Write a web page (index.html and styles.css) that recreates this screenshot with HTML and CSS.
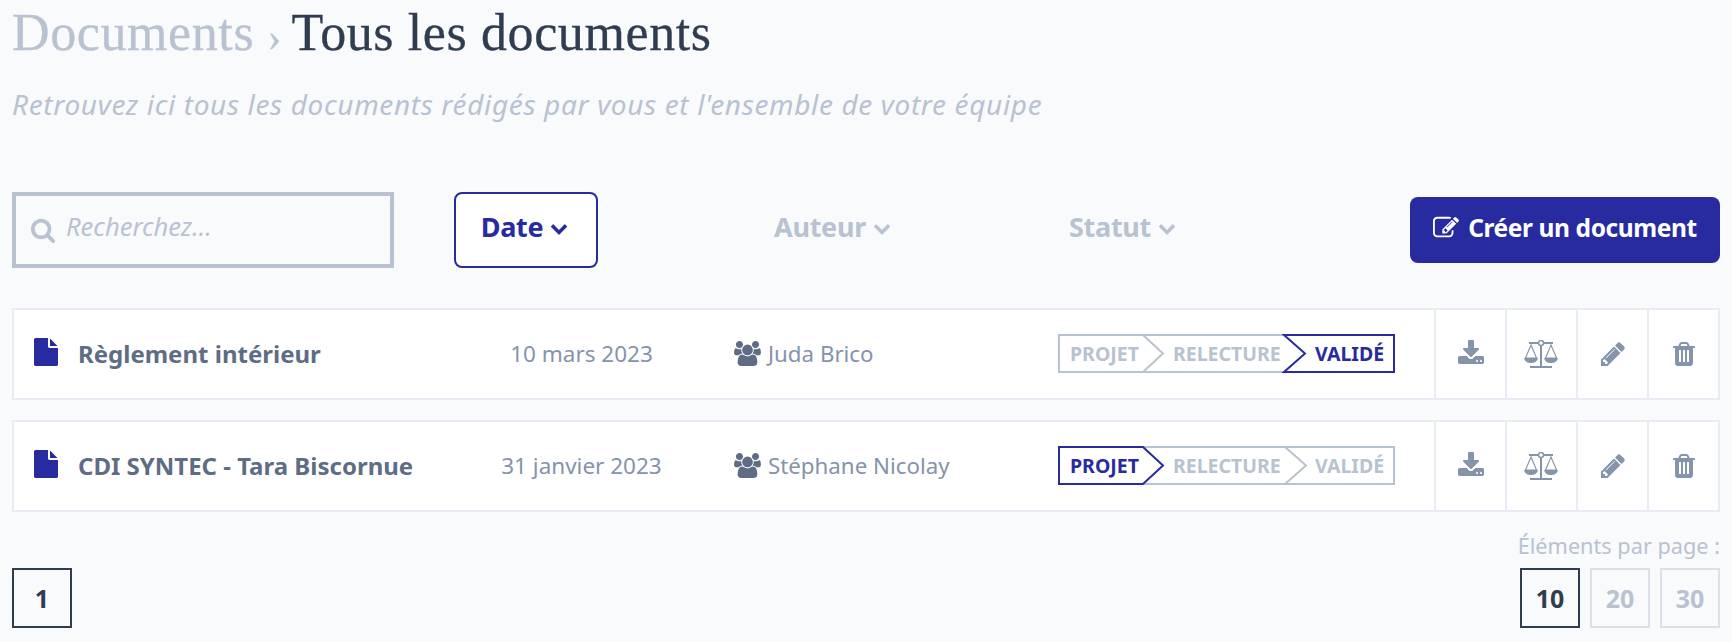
FILE: index.html
```html
<!DOCTYPE html>
<html lang="fr">
<head>
    <meta charset="UTF-8">
    <title>Tous les documents</title>
    <link rel="stylesheet" href="styles.css">
</head>
<body>
    <svg class="defs" width="0" height="0">
        <symbol id="i-search" viewBox="0 0 1792 1792"><path d="M1216 832q0-185-131.500-316.500t-316.500-131.500-316.500 131.500-131.500 316.500 131.500 316.500 316.500 131.500 316.500-131.500 131.500-316.500zm512 832q0 52-38 90t-90 38q-54 0-90-38l-343-342q-179 124-399 124-143 0-273.500-55.500t-225-150-150-225-55.500-273.500 55.500-273.500 150-225 225-150 273.500-55.500 273.500 55.500 225 150 150 225 55.500 273.500q0 220-124 399l343 343q37 37 37 90z"/></symbol>
        <symbol id="i-chevron" viewBox="0 0 1792 1792"><path d="M1683 808l-742 741q-19 19-45 19t-45-19l-742-741q-19-19-19-45.500t19-45.500l166-165q19-19 45-19t45 19l531 531 531-531q19-19 45-19t45 19l166 165q19 19 19 45.500t-19 45.500z"/></symbol>
        <symbol id="i-edit" viewBox="0 0 1792 1792"><path d="M888 1184l116-116-152-152-116 116v56h96v96h56zm440-720q-16-16-33 1l-350 350q-17 17-1 33t33-1l350-350q17-17 1-33zm80 594v190q0 119-84.500 203.500t-203.500 84.500h-832q-119 0-203.500-84.500t-84.500-203.500v-832q0-119 84.500-203.500t203.500-84.500h832q63 0 117 25 15 7 18 23 3 17-9 29l-49 49q-14 14-32 8-23-6-45-6h-832q-66 0-113 47t-47 113v832q0 66 47 113t113 47h832q66 0 113-47t47-113v-126q0-13 9-22l64-64q15-15 35-7t20 29zm-96-738l288 288-672 672h-288v-288zm444 132l-92 92-288-288 92-92q28-28 68-28t68 28l152 152q28 28 28 68t-28 68z"/></symbol>
        <symbol id="i-file" viewBox="0 0 1792 1792"><path d="M1152 512v-472q22 14 36 28l408 408q14 14 28 36h-472zm-128 32q0 40 28 68t68 28h544v1056q0 40-28 68t-68 28h-1344q-40 0-68-28t-28-68v-1600q0-40 28-68t68-28h800v544z"/></symbol>
        <symbol id="i-users" viewBox="0 0 1920 1792"><path d="M593 896q-162 5-265 128h-134q-82 0-138-40.500t-56-118.500q0-353 124-353 6 0 43.500 21t97.500 42.500 119 21.500q67 0 133-23-5 37-5 66 0 139 81 256zm1071 637q0 120-73 189.500t-194 69.500h-874q-121 0-194-69.500t-73-189.500q0-53 3.500-103.500t14-109 26.500-108.500 43-97.500 62-81 85.500-53.500 111.500-20q10 0 43 21.500t73 48 107 48 135 21.500 135-21.500 107-48 73-48 43-21.500q61 0 111.500 20t85.500 53.500 62 81 43 97.500 26.500 108.500 14 109 3.500 103.500zm-1024-1277q0 106-75 181t-181 75-181-75-75-181 75-181 181-75 181 75 75 181zm704 384q0 159-112.500 271.500t-271.500 112.500-271.500-112.500-112.500-271.500 112.500-271.500 271.500-112.500 271.500 112.500 112.500 271.500zm576 225q0 78-56 118.500t-138 40.500h-134q-103-123-265-128 81-117 81-256 0-29-5-66 66 23 133 23 59 0 119-21.500t97.500-42.500 43.500-21q124 0 124 353zm-128-609q0 106-75 181t-181 75-181-75-75-181 75-181 181-75 181 75 75 181z"/></symbol>
        <symbol id="i-download" viewBox="0 0 1792 1792"><path d="M1344 1344q0-26-19-45t-45-19-45 19-19 45 19 45 45 19 45-19 19-45zm256 0q0-26-19-45t-45-19-45 19-19 45 19 45 45 19 45-19 19-45zm128-224v320q0 40-28 68t-68 28h-1472q-40 0-68-28t-28-68v-320q0-40 28-68t68-28h465l135 136q58 56 136 56t136-56l136-136h464q40 0 68 28t28 68zm-325-569q17 41-14 70l-448 448q-18 19-45 19t-45-19l-448-448q-31-29-14-70 17-39 59-39h256v-448q0-26 19-45t45-19h256q26 0 45 19t19 45v448h256q42 0 59 39z"/></symbol>
        <symbol id="i-scale" viewBox="0 0 34 28">
            <path d="M5 3h24M17 3v23M6 27h22" fill="none" stroke="currentColor" stroke-width="2"/>
            <circle cx="17" cy="3" r="2.500" fill="#fff" stroke="currentColor" stroke-width="1.500"/>
            <path d="M7 5L1.500 18h11zM27 5l-5.500 13h11z" fill="none" stroke="currentColor" stroke-width="1.100"/>
            <path d="M0 18h14q-1 5-7 5t-7-5zM20 18h14q-1 5-7 5t-7-5z"/>
        </symbol>
        <symbol id="i-pencil" viewBox="0 0 1792 1792"><path d="M491 1536l91-91-235-235-91 91v107h128v128h107zm523-928q0-22-22-22-10 0-17 7l-542 542q-7 7-7 17 0 22 22 22 10 0 17-7l542-542q7-7 7-17zm-54-192l416 416-832 832h-416v-416zm683 96q0 53-37 90l-166 166-416-416 166-165q36-38 90-38 53 0 91 38l235 234q37 38 37 91z"/></symbol>
        <symbol id="i-trash" viewBox="0 0 1792 1792"><path d="M704 1376v-704q0-14-9-23t-23-9h-64q-14 0-23 9t-9 23v704q0 14 9 23t23 9h64q14 0 23-9t9-23zm256 0v-704q0-14-9-23t-23-9h-64q-14 0-23 9t-9 23v704q0 14 9 23t23 9h64q14 0 23-9t9-23zm256 0v-704q0-14-9-23t-23-9h-64q-14 0-23 9t-9 23v704q0 14 9 23t23 9h64q14 0 23-9t9-23zm-544-992h448l-48-117q-7-9-17-11h-317q-10 2-17 11zm928 32v64q0 14-9 23t-23 9h-96v948q0 83-47 143.500t-113 60.500h-832q-66 0-113-58.500t-47-141.500v-952h-96q-14 0-23-9t-9-23v-64q0-14 9-23t23-9h309l70-167q15-37 54-63t79-26h320q40 0 79 26t54 63l70 167h309q14 0 23 9t9 23z"/></symbol>
    </svg>

    <header class="page-head">
        <h1><span class="crumb">Documents <span class="crumb-sep">›</span></span> Tous les documents</h1>
        <p class="subtitle">Retrouvez ici tous les documents rédigés par vous et l'ensemble de votre équipe</p>
    </header>

    <section class="toolbar">
        <label class="search">
            <svg class="search-icon"><use href="#i-search"/></svg>
            <span>Recherchez...</span>
        </label>
        <button class="sort sort-date active">Date <svg class="chev"><use href="#i-chevron"/></svg></button>
        <button class="sort sort-author">Auteur <svg class="chev"><use href="#i-chevron"/></svg></button>
        <button class="sort sort-status">Statut <svg class="chev"><use href="#i-chevron"/></svg></button>
        <button class="create"><svg class="create-icon"><use href="#i-edit"/></svg> Créer un document</button>
    </section>

    <section class="list">
        <article class="row">
            <div class="doc-name"><svg class="doc-icon"><use href="#i-file"/></svg>Règlement intérieur</div>
            <div class="doc-date">10 mars 2023</div>
            <div class="doc-author"><svg class="users-icon"><use href="#i-users"/></svg>Juda Brico</div>
            <div class="doc-status">
                <div class="steps">
                    <svg class="steps-line" viewBox="0 0 337 39">
                        <path class="line-off" d="M226 1H1v37h225M85 1l20 18.500L85 38"/>
                        <path class="line-on" d="M226 1h110v37H226l21-18.500z"/>
                    </svg>
                    <span class="step step-1">PROJET</span>
                    <span class="step step-2">RELECTURE</span>
                    <span class="step step-3 on">VALIDÉ</span>
                </div>
            </div>
            <div class="actions">
                <a class="action"><svg class="ic"><use href="#i-download"/></svg></a>
                <a class="action"><svg class="ic-scale"><use href="#i-scale"/></svg></a>
                <a class="action"><svg class="ic"><use href="#i-pencil"/></svg></a>
                <a class="action"><svg class="ic"><use href="#i-trash"/></svg></a>
            </div>
        </article>
        <article class="row">
            <div class="doc-name"><svg class="doc-icon"><use href="#i-file"/></svg>CDI SYNTEC - Tara Biscornue</div>
            <div class="doc-date">31 janvier 2023</div>
            <div class="doc-author"><svg class="users-icon"><use href="#i-users"/></svg>Stéphane Nicolay</div>
            <div class="doc-status">
                <div class="steps">
                    <svg class="steps-line" viewBox="0 0 337 39">
                        <path class="line-off" d="M85 1h251v37H85M227 1l21 18.500L227 38"/>
                        <path class="line-on" d="M85 1H1v37h84l20-18.500z"/>
                    </svg>
                    <span class="step step-1 on">PROJET</span>
                    <span class="step step-2">RELECTURE</span>
                    <span class="step step-3">VALIDÉ</span>
                </div>
            </div>
            <div class="actions">
                <a class="action"><svg class="ic"><use href="#i-download"/></svg></a>
                <a class="action"><svg class="ic-scale"><use href="#i-scale"/></svg></a>
                <a class="action"><svg class="ic"><use href="#i-pencil"/></svg></a>
                <a class="action"><svg class="ic"><use href="#i-trash"/></svg></a>
            </div>
        </article>
    </section>

    <footer class="pager">
        <div class="page-box current">1</div>
        <div class="per-page">
            <div class="per-page-label">Éléments par page :</div>
            <div class="per-page-boxes">
                <div class="page-box current">10</div>
                <div class="page-box">20</div>
                <div class="page-box">30</div>
            </div>
        </div>
    </footer>
</body>
</html>
```
FILE: styles.css
```css
* {
    box-sizing: border-box;
}
body {
    font-family: "Noto Sans", sans-serif;
    margin: 0;
    padding: 0 12px;
    height: 642px;
    overflow: hidden;
    background-color: #f9fafc;
    color: #303c50;
}
.defs {
    position: absolute;
}
svg {
    fill: currentColor;
    display: block;
}

/* header */
.page-head {
    height: 192px;
}
h1 {
    font-family: "Liberation Serif", serif;
    font-size: 52px;
    font-weight: normal;
    line-height: 54px;
    margin: 0;
    padding-top: 6px;
    height: 60px;
    letter-spacing: 0.6px;
    -webkit-text-stroke: 0.3px;
}
.crumb {
    color: #b8c2d0;
    margin-right: -3px;
}
.crumb-sep {
    font-size: 40px;
}
.subtitle {
    font-style: italic;
    font-size: 28px;
    line-height: 32px;
    letter-spacing: 0.64px;
    color: #b8c2d0;
    margin: 28px 0 0;
}

/* toolbar */
.toolbar {
    display: flex;
    align-items: center;
    height: 76px;
}
.search {
    width: 382px;
    height: 76px;
    border: 4px solid #b8c2d0;
    display: flex;
    align-items: center;
    gap: 10px;
    padding: 0 0 8px 14px;
    font-size: 25.5px;
    font-style: italic;
    color: #b8c2d0;
}
.search-icon {
    width: 26px;
    height: 26px;
    margin-top: 8px;
}
.sort {
    font-family: inherit;
    font-size: 27px;
    font-weight: bold;
    letter-spacing: -0.3px;
    background: none;
    border: 2px solid transparent;
    color: #b8c2d0;
    display: flex;
    align-items: center;
    justify-content: center;
    gap: 7px;
    height: 76px;
    padding: 0 0 8px;
}
.sort .chev {
    width: 18px;
    height: 18px;
    margin-top: 4px;
}
.sort-date {
    width: 144px;
    margin-left: 60px;
    padding-right: 3px;
}
.sort-author {
    width: 121px;
    margin-left: 174px;
}
.sort-status {
    width: 113px;
    margin-left: 173px;
}
.sort.active {
    color: #272b9f;
    background-color: #fff;
    border-color: #272b9f;
    border-radius: 8px;
}
.create {
    font-family: inherit;
    font-size: 24.5px;
    font-weight: bold;
    letter-spacing: -0.4px;
    color: #fff;
    background-color: #272b9f;
    border: none;
    border-radius: 8px;
    width: 310px;
    height: 66px;
    margin-left: auto;
    display: flex;
    align-items: center;
    justify-content: center;
    gap: 9px;
    padding: 0 0 6px;
}
.create-icon {
    width: 26px;
    height: 26px;
    margin-top: 2px;
}

/* rows */
.list {
    display: flex;
    flex-direction: column;
    gap: 20px;
    margin-top: 40px;
}
.row {
    display: grid;
    grid-template-columns: 466px 203px 375px 376px 1fr;
    align-items: stretch;
    height: 92px;
    background-color: #fff;
    border: 2px solid #e8ebf3;
}
.doc-name {
    display: flex;
    align-items: center;
    gap: 18px;
    padding: 0 0 2px 18px;
    font-size: 24px;
    font-weight: bold;
    color: #5e6d85;
}
.doc-icon {
    width: 28px;
    height: 28px;
    color: #272b9f;
    margin-top: -2px;
}
.doc-date {
    display: flex;
    align-items: center;
    justify-content: center;
    padding-bottom: 2px;
    font-size: 22.5px;
    color: #8593ab;
}
.doc-author {
    display: flex;
    align-items: center;
    gap: 7px;
    padding: 0 0 2px 51px;
    font-size: 22.3px;
    color: #8593ab;
}
.users-icon {
    width: 27px;
    height: 25px;
    color: #5e6d85;
}
.doc-status {
    display: flex;
    align-items: center;
    padding-bottom: 2px;
}
.steps {
    position: relative;
    width: 337px;
    height: 39px;
    font-size: 19.5px;
    font-weight: bold;
    color: #b8c2d0;
}
.steps-line {
    position: absolute;
    inset: 0;
    width: 337px;
    height: 39px;
    fill: none;
}
.line-off {
    stroke: #b8c2d0;
    stroke-width: 2;
}
.line-on {
    stroke: #272b9f;
    stroke-width: 2;
}
.step {
    position: absolute;
    top: 0;
    line-height: 39px;
}
.step-1 {
    left: 12px;
}
.step-2 {
    left: 115px;
}
.step-3 {
    left: 257px;
}
.step.on {
    color: #272b9f;
}
.actions {
    display: flex;
    align-items: stretch;
}
.action {
    flex: 1;
    display: flex;
    align-items: center;
    justify-content: center;
    border-left: 2px solid #e8ebf3;
    color: #8593ab;
}
.ic {
    width: 28px;
    height: 28px;
}
.ic-scale {
    width: 34px;
    height: 28px;
    margin-left: -2px;
}

/* pagination */
.pager {
    display: flex;
    justify-content: space-between;
    align-items: flex-end;
    height: 116px;
}
.page-box {
    width: 60px;
    height: 60px;
    border: 2px solid #dde0e8;
    display: flex;
    align-items: center;
    justify-content: center;
    font-size: 25px;
    font-weight: bold;
    color: #b8c2d0;
}
.page-box.current {
    border-color: #303c50;
    color: #303c50;
}
.per-page-label {
    font-size: 21.7px;
    line-height: 30px;
    color: #b8c2d0;
    text-align: right;
    margin-bottom: 7px;
}
.per-page-boxes {
    display: flex;
    justify-content: flex-end;
    gap: 10px;
}
```
